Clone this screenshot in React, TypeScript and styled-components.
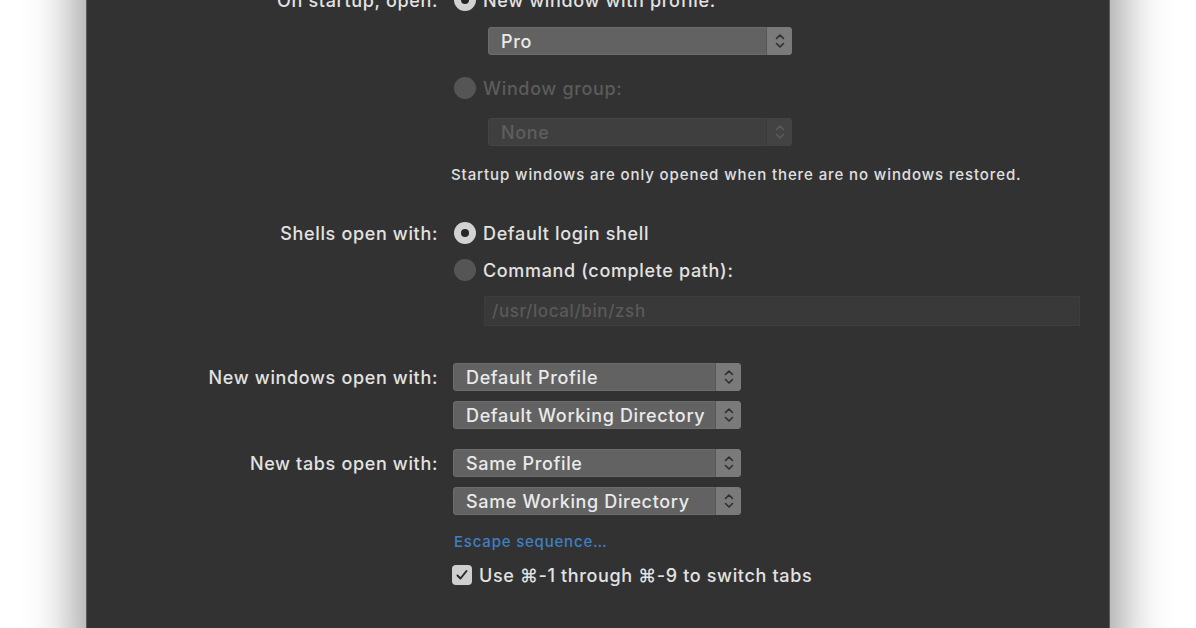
import React from "react";
import styled, { createGlobalStyle } from "styled-components";

const GlobalStyle = createGlobalStyle`
  html, body {
    margin: 0;
    padding: 0;
    background: #ffffff;
    overflow: hidden;
  }
  body {
    font-family: Inter, "Liberation Sans", Arial, sans-serif;
    -webkit-font-smoothing: antialiased;
  }
`;

const Page = styled.div`
  width: 1196px;
  height: 628px;
  overflow: hidden;
`;

const Window = styled.div`
  margin: -40px 86px 0;
  height: 700px;
  background: #323232;
  border-left: 1px solid #5a5a5a;
  border-right: 1px solid #5a5a5a;
  box-shadow: 0 0 44px 12px rgba(0, 0, 0, 0.38);
  padding-top: 28px;
  box-sizing: border-box;
  color: #e2e2e2;
  font-size: 18px;
  font-weight: 500;
  letter-spacing: 0.65px;
`;

const Row = styled.div<{ $gap?: number; $h?: number }>`
  display: grid;
  grid-template-columns: 351px 1fr;
  column-gap: 15px;
  align-items: center;
  margin-top: ${(p) => p.$gap ?? 0}px;
  height: ${(p) => p.$h ?? 24}px;
`;

const Label = styled.div`
  text-align: right;
  white-space: nowrap;
`;

const Cell = styled.div<{ $indent?: number }>`
  display: flex;
  align-items: center;
  padding-left: ${(p) => p.$indent ?? 0}px;
  min-width: 0;
`;

const RadioDot = styled.span<{ $on?: boolean }>`
  width: 22px;
  height: 22px;
  border-radius: 50%;
  flex: none;
  margin-left: 1px;
  margin-right: 7px;
  box-sizing: border-box;
  background: ${(p) => (p.$on ? "#d2d2d2" : "#555555")};
  display: flex;
  align-items: center;
  justify-content: center;
  &::after {
    content: "";
    width: 8px;
    height: 8px;
    border-radius: 50%;
    background: #262626;
    display: ${(p) => (p.$on ? "block" : "none")};
  }
`;

const RadioText = styled.span<{ $disabled?: boolean }>`
  color: ${(p) => (p.$disabled ? "#5c5c5c" : "#e2e2e2")};
  white-space: nowrap;
`;

const Popup = styled.div<{ $w: number; $disabled?: boolean }>`
  width: ${(p) => p.$w}px;
  height: 28px;
  display: flex;
  align-items: stretch;
  border-radius: 4px;
  overflow: hidden;
  background: ${(p) => (p.$disabled ? "#3f3f3f" : "#626262")};
  box-shadow: inset 0 0 0 1px ${(p) => (p.$disabled ? "#444" : "#6c6c6c")};
  color: ${(p) => (p.$disabled ? "#5e5e5e" : "#eaeaea")};
`;

const PopupText = styled.span`
  flex: 1;
  display: flex;
  align-items: center;
  padding-left: 13px;
  white-space: nowrap;
`;

const Stepper = styled.span<{ $disabled?: boolean }>`
  width: 25px;
  flex: none;
  display: flex;
  align-items: center;
  justify-content: center;
  background: ${(p) => (p.$disabled ? "#434343" : "#7a7a7a")};
  border-left: 1px solid ${(p) => (p.$disabled ? "#3a3a3a" : "#575757")};
  color: ${(p) => (p.$disabled ? "#5a5a5a" : "#2e2e2e")};
`;

const TextField = styled.div`
  width: 596px;
  height: 30px;
  background: #393939;
  box-shadow: inset 0 0 0 1px #3e3e3e;
  color: #5a5a5a;
  display: flex;
  align-items: center;
  padding-left: 8px;
  box-sizing: border-box;
  font-size: 17px;
  letter-spacing: 0.6px;
`;

const Note = styled.div`
  font-size: 15px;
  letter-spacing: 0.9px;
  color: #e0e0e0;
  margin-left: -2px;
  white-space: nowrap;
`;

const Link = styled.span`
  font-size: 15px;
  letter-spacing: 0.8px;
  color: #3f7fc4;
  margin-left: 1px;
`;

const CheckBox = styled.span`
  width: 20px;
  height: 20px;
  border-radius: 4px;
  background: #cfcfcf;
  flex: none;
  margin-left: -1px;
  margin-right: 7px;
  display: flex;
  align-items: center;
  justify-content: center;
  color: #2a2a2a;
`;

const Chevrons = ({ disabled }: { disabled?: boolean }) => (
  <Stepper $disabled={disabled}>
    <svg width="10" height="16" viewBox="0 0 10 16" fill="none">
      <path d="M1.5 5.5 L5 2 L8.5 5.5" stroke="currentColor" strokeWidth="1.6" strokeLinecap="round" strokeLinejoin="round" />
      <path d="M1.5 10.5 L5 14 L8.5 10.5" stroke="currentColor" strokeWidth="1.6" strokeLinecap="round" strokeLinejoin="round" />
    </svg>
  </Stepper>
);

const PopupButton = ({ value, width, disabled }: { value: string; width: number; disabled?: boolean }) => (
  <Popup $w={width} $disabled={disabled}>
    <PopupText>{value}</PopupText>
    <Chevrons disabled={disabled} />
  </Popup>
);

const Radio = ({ on, disabled, children }: { on?: boolean; disabled?: boolean; children: React.ReactNode }) => (
  <>
    <RadioDot $on={on} />
    <RadioText $disabled={disabled}>{children}</RadioText>
  </>
);

export default function App() {
  return (
    <Page>
      <GlobalStyle />
      <Window>
        <Row>
          <Label>On startup, open:</Label>
          <Cell>
            <Radio on>New window with profile:</Radio>
          </Cell>
        </Row>
        <Row $gap={15} $h={28}>
          <div />
          <Cell $indent={35}>
            <PopupButton value="Pro" width={304} />
          </Cell>
        </Row>
        <Row $gap={21}>
          <div />
          <Cell>
            <Radio disabled>Window group:</Radio>
          </Cell>
        </Row>
        <Row $gap={18} $h={28}>
          <div />
          <Cell $indent={35}>
            <PopupButton value="None" width={304} disabled />
          </Cell>
        </Row>
        <Row $gap={18} $h={20}>
          <div />
          <Cell>
            <Note>Startup windows are only opened when there are no windows restored.</Note>
          </Cell>
        </Row>

        <Row $gap={37}>
          <Label>Shells open with:</Label>
          <Cell>
            <Radio on>Default login shell</Radio>
          </Cell>
        </Row>
        <Row $gap={13}>
          <div />
          <Cell>
            <Radio>Command (complete path):</Radio>
          </Cell>
        </Row>
        <Row $gap={14} $h={30}>
          <div />
          <Cell $indent={31}>
            <TextField>/usr/local/bin/zsh</TextField>
          </Cell>
        </Row>

        <Row $gap={37} $h={28}>
          <Label>New windows open with:</Label>
          <Cell>
            <PopupButton value="Default Profile" width={288} />
          </Cell>
        </Row>
        <Row $gap={10} $h={28}>
          <div />
          <Cell>
            <PopupButton value="Default Working Directory" width={288} />
          </Cell>
        </Row>
        <Row $gap={20} $h={28}>
          <Label>New tabs open with:</Label>
          <Cell>
            <PopupButton value="Same Profile" width={288} />
          </Cell>
        </Row>
        <Row $gap={10} $h={28}>
          <div />
          <Cell>
            <PopupButton value="Same Working Directory" width={288} />
          </Cell>
        </Row>
        <Row $gap={16} $h={20}>
          <div />
          <Cell>
            <Link>Escape sequence…</Link>
          </Cell>
        </Row>
        <Row $gap={13} $h={22}>
          <div />
          <Cell>
            <CheckBox>
              <svg width="14" height="14" viewBox="0 0 14 14" fill="none">
                <path d="M2.5 7.5 L5.5 10.5 L11.5 3" stroke="currentColor" strokeWidth="2" strokeLinecap="round" strokeLinejoin="round" />
              </svg>
            </CheckBox>
            <RadioText>Use ⌘-1 through ⌘-9 to switch tabs</RadioText>
          </Cell>
        </Row>
      </Window>
    </Page>
  );
}
